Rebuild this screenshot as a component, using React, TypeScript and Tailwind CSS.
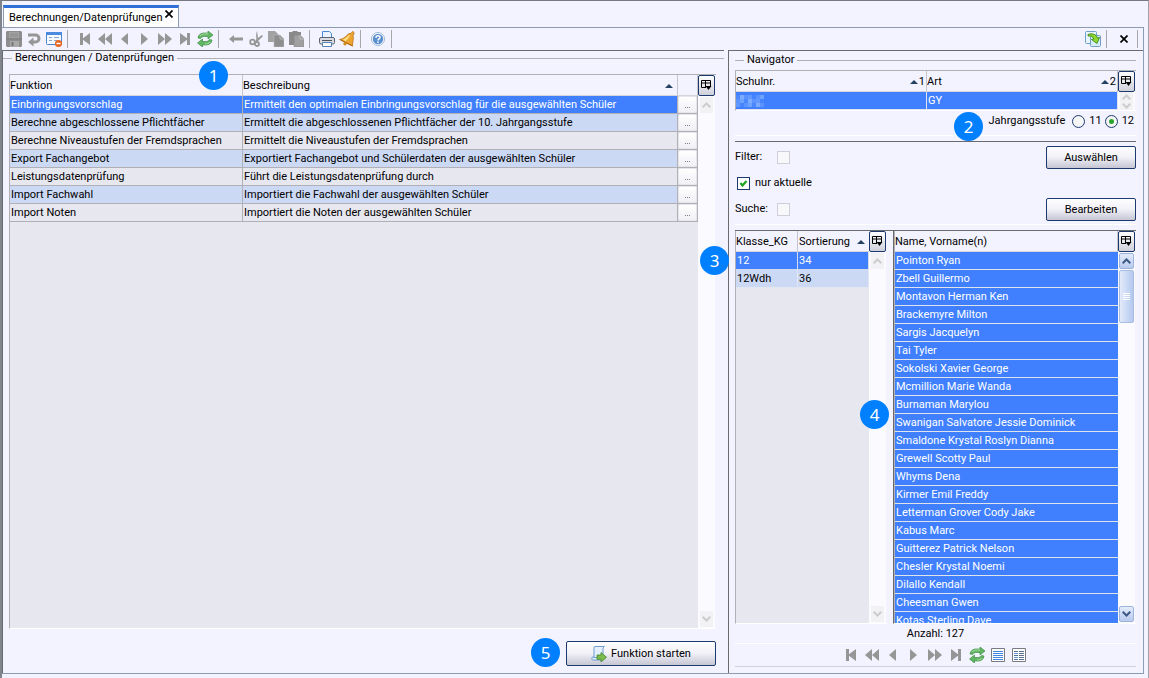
import React from "react";

type IconProps = { children: React.ReactNode; box?: number };

const Svg = ({ children, box = 16 }: IconProps) => (
  <svg width={box} height={box} viewBox={`0 0 ${box} ${box}`} aria-hidden="true" className="block shrink-0">
    {children}
  </svg>
);

const GREY = "#969696";

const SaveIcon = () => (
  <Svg>
    <path d="M1 0h14l1 1v14l-1 1H1l-1-1V1z" fill="#8e8e8e" />
    <path d="M3 1h10v6H3z" fill="#a2a2a2" />
    <path d="M4 3h8M4 5h8" stroke="#8c8c8c" />
    <path d="M4 10h9v6H4z" fill="#aaa" />
    <path d="M5.500 11h2v4h-2z" fill="#777" />
    <path d="M0 8h16" stroke="#7f7f7f" />
  </Svg>
);
const UndoIcon = () => (
  <Svg>
    <path d="M2 4h7.500a3.500 3.500 0 0 1 0 7H6" fill="none" stroke={GREY} strokeWidth="3" />
    <path d="M7.500 6.500v9L2 11z" fill={GREY} />
  </Svg>
);
const FormIcon = () => (
  <Svg>
    <rect x="0.500" y="1.500" width="15" height="12" rx="1" fill="#f4f8ff" stroke="#4a86cf" />
    <path d="M0 1h16v3H0z" fill="#4a8be0" />
    <path d="M3 6.500h3M8 6.500h5M3 9.500h3M8 9.500h3" stroke="#8aa7cc" />
    <circle cx="12.500" cy="12.500" r="3.500" fill="#e8641b" />
    <path d="M10.500 12.500h4" stroke="#fff" strokeWidth="1.500" />
  </Svg>
);
const FirstIcon = () => (
  <Svg>
    <path d="M3 2h3v5.200L13 2v12L6 8.800V14H3z" fill={GREY} />
  </Svg>
);
const LastIcon = () => (
  <Svg>
    <path d="M13 2h-3v5.200L3 2v12l7-5.200V14h3z" fill={GREY} />
  </Svg>
);
const RewindIcon = () => (
  <Svg>
    <path d="M8 2v12L1 8zM15 2v12L8 8z" fill={GREY} />
  </Svg>
);
const ForwardIcon = () => (
  <Svg>
    <path d="M1 2v12l7-6zM8 2v12l7-6z" fill={GREY} />
  </Svg>
);
const PrevIcon = () => (
  <Svg>
    <path d="M11 2v12L4 8z" fill={GREY} />
  </Svg>
);
const NextIcon = () => (
  <Svg>
    <path d="M4 2v12l7-6z" fill={GREY} />
  </Svg>
);
const RefreshIcon = () => (
  <Svg>
    <path d="M1 7C1.500 3.500 4 2 7 2h4V0l5 4-5 4V5.500H7.500C5.500 5.500 4.500 6 3.500 7.500z" fill="#62b562" stroke="#3f8f46" strokeWidth=".7" />
    <path d="M15 9c-.500 3.500-3 5-6 5H5.500v2L.500 12l5-4v2.500h3c2 0 3-.500 4-2z" fill="#62b562" stroke="#3f8f46" strokeWidth=".7" />
    <path d="M3 5c1-1.500 3-2 5-2h3M13 11c-1 1.500-3 2-5 2" fill="none" stroke="#a7dca2" />
  </Svg>
);
const BackIcon = () => (
  <Svg>
    <path d="M1 8l5-4v2.500h9v3H6V12z" fill={GREY} />
  </Svg>
);
const CutIcon = () => (
  <Svg>
    <path d="M9 0c-1 3-1 5-.500 8L7 11l1.500.500L15 5l-1-1-4 3z" fill={GREY} />
    <circle cx="4.500" cy="11" r="2.300" fill="none" stroke={GREY} strokeWidth="1.800" />
    <circle cx="9" cy="13" r="2" fill="none" stroke={GREY} strokeWidth="1.800" />
  </Svg>
);
const CopyIcon = () => (
  <Svg>
    <path d="M0 0h7l3 3v8H0z" fill="#a2a2a2" />
    <path d="M6 4h6l4 4v8H6z" fill="#8e8e8e" stroke="#b9b9b9" strokeWidth=".6" />
    <path d="M12 4v4h4" fill="none" stroke="#b8b8b8" />
  </Svg>
);
const PasteIcon = () => (
  <Svg>
    <path d="M1 1h3l1-1h4l1 1h3v13H1z" fill="#8a8a8a" />
    <path d="M6 4h6l4 4v8H6z" fill="#a0a0a0" stroke="#858585" strokeWidth=".6" />
    <path d="M12 4v4h4" fill="none" stroke="#bdbdbd" />
  </Svg>
);
const PrintIcon = () => (
  <Svg>
    <path d="M3.500 8V.500h7l2 2V8z" fill="#eaf3ff" stroke="#4b8ad0" />
    <rect x=".5" y="6.500" width="15" height="6.500" rx="1.500" fill="#d9dce2" stroke="#5c6470" />
    <path d="M3 9.500h10" stroke="#4d535c" />
    <path d="M3.500 11.500h9v4h-9z" fill="#fff" stroke="#5582b8" />
  </Svg>
);
const BellIcon = () => (
  <Svg>
    <path d="M13.500.500c1.300.300 2 1.300 1.500 2.500l-1 1c1 4-.500 6.500-.500 11L.500 8.500C5 8 7 5 10 2.500l2 0z" fill="#eea42c" stroke="#b9721a" strokeWidth=".8" />
    <path d="M10 4C7 7 5.500 8 3.500 8.700l3 1.500C9 8.500 10 6 11 4.500z" fill="#ffe08a" />
    <path d="M2 9l11.500 6" stroke="#a8640f" />
    <circle cx="6" cy="12.800" r="1.700" fill="#d68a1c" />
  </Svg>
);
const HelpIcon = () => (
  <Svg>
    <circle cx="8" cy="8" r="6.500" fill="#fff" stroke="#9fb6d6" />
    <circle cx="8" cy="8" r="5.200" fill="#5b8fd0" />
    <path d="M6 6.700c0-2.700 4-2.600 4-.3C10 8 8 7.900 8 9.600M8 10.600v1.400" fill="none" stroke="#fff" strokeWidth="1.500" />
  </Svg>
);
const SyncPagesIcon = () => (
  <Svg>
    <rect x=".5" y=".5" width="11" height="12" rx="1" fill="#eaf4fc" stroke="#6fa0c8" />
    <rect x="5.500" y="4.500" width="10" height="11" rx="1" fill="#d8ebf8" stroke="#6fa0c8" />
    <path d="M3 3.500c4-1.500 8-.500 9.500 3.500l2-.500-2.500 6-5.500-4 2.300-.500C8 6 6 4.500 3 5z" fill="#8fd62e" stroke="#3c8a1c" strokeWidth=".9" />
  </Svg>
);
const ScriptRunIcon = () => (
  <Svg>
    <path d="M4 .500h9.500c-1.500 1-1.500 2-1.500 3.500V14H1.500C.500 14 .500 11 2 11h1V3c0-1.500 0-2.500 1-2.500z" fill="#e3f0fc" stroke="#6d9dcb" />
    <path d="M2 11.500h7" stroke="#7aa6d0" />
    <path d="M6 9h4V6.500l5.500 4.700L10 16v-2.700H6z" fill="#7cbc4c" stroke="#3f8428" strokeWidth=".8" />
  </Svg>
);
const ListIcon = () => (
  <Svg>
    <path d="M1.500 1.500h13v13h-13z" fill="#fff" stroke="#777b84" />
    <path d="M3 4.500h10M3 6.500h10M3 8.500h10M3 10.500h10M3 12.500h10" stroke="#3f87e0" />
  </Svg>
);
const DetailIcon = () => (
  <Svg>
    <path d="M1.500 1.500h13v13h-13z" fill="#fff" stroke="#777b84" />
    <path d="M3 4.500h4M3 8.500h4M3 12.500h4M8 4.500h5M8 6.500h5M8 8.500h5M8 10.500h5M8 12.500h5" stroke="#5c6f8c" />
    <path d="M3 6.500h4M3 10.500h4" stroke="#5a9bec" />
  </Svg>
);
const CloseIcon = ({ size = 8 }: { size?: number }) => (
  <svg width={size} height={size} viewBox="0 0 8 8" aria-hidden="true">
    <path d="M.5.5l7 7M7.500.5l-7 7" stroke="#000" strokeWidth="1.700" />
  </svg>
);
const SortArrow = () => (
  <svg width="8" height="4" viewBox="0 0 8 4" aria-hidden="true" className="shrink-0">
    <path d="M4 0l4 4H0z" fill="#22405f" />
  </svg>
);

function IconButton({ label, children, wide }: { label: string; children: React.ReactNode; wide?: boolean }) {
  return (
    <button
      type="button"
      aria-label={label}
      className={wide ? "flex h-5 w-[21px] items-center pl-[2px]" : "flex h-5 w-5 items-center justify-center"}
    >
      {children}
    </button>
  );
}

const Separator = ({ end }: { end?: boolean }) => (
  <span className={end ? "flex h-5 w-[7px] pl-[3px]" : "flex h-5 w-[11px] pl-[3px]"}>
    <span className="h-[18px] w-px self-center bg-[#a8a8ac]" />
  </span>
);

function Legend({ children }: { children: React.ReactNode }) {
  return (
    <div className="flex items-center">
      <span className="h-px w-[9px] bg-[#b0b0b6]" />
      <h2 className="px-[3px] leading-[14px]">{children}</h2>
      <span className="h-px flex-1 bg-[#b0b0b6]" />
    </div>
  );
}

function ColumnButton() {
  return (
    <button
      type="button"
      aria-label="Spalten auswählen"
      className="flex h-[21px] w-[17px] shrink-0 items-center justify-center rounded-[2px] border border-[#1b3a6e] bg-gradient-to-b from-white to-[#cfcfdc]"
    >
      <svg width="11" height="11" viewBox="0 0 11 11" aria-hidden="true">
        <path d="M5 7.500H.500V.500h9V6M.500 3h9M4.500.500v7" fill="none" stroke="#000" />
        <path d="M4.500 6h6l-3 4z" fill="#000" />
      </svg>
    </button>
  );
}

function ScrollButton({ down, active, short }: { down?: boolean; active?: boolean; short?: boolean }) {
  const size = short ? "h-[9px] w-[13px]" : active ? "h-4 w-[15px]" : "h-4 w-[13px]";
  const look = active
    ? "rounded-[2px] border border-[#9db4dc] bg-gradient-to-b from-[#e4ecfb] to-[#b9caee]"
    : "bg-[#f2f2f4]";
  return (
    <button
      type="button"
      aria-label={down ? "Nach unten" : "Nach oben"}
      className={`flex shrink-0 items-center justify-center ${size} ${look}`}
    >
      <svg width="9" height="6" viewBox="0 0 9 6" aria-hidden="true">
        <path
          d={down ? "M.7.700l3.800 3.800L8.300.700" : "M.7 5.300l3.800-3.800 3.800 3.800"}
          fill="none"
          stroke={active ? "#3d5a85" : "#cdcdd0"}
          strokeWidth="2"
        />
      </svg>
    </button>
  );
}

function SideBar({ active, short }: { active?: boolean; short?: boolean }) {
  return (
    <div className="flex w-[18px] shrink-0 flex-col">
      <ColumnButton />
      <div
        className={`flex w-[17px] flex-1 flex-col items-center justify-between bg-[#fbfbff] ${short ? "py-0" : "py-px"}`}
      >
        <div className="flex flex-col items-center gap-px">
          <ScrollButton active={active} short={short} />
          {active && (
            <div className="flex h-[53px] w-[15px] flex-col items-center justify-center gap-px rounded-[2px] border border-[#a9bce2] bg-gradient-to-r from-[#e3ebfb] to-[#b4c8ee]">
              <span className="h-px w-[7px] bg-white" />
              <span className="h-px w-[7px] bg-white" />
              <span className="h-px w-[7px] bg-white" />
              <span className="h-px w-[7px] bg-white" />
            </div>
          )}
        </div>
        <ScrollButton down active={active} short={short} />
      </div>
    </div>
  );
}

function PushButton({ children, className }: { children: React.ReactNode; className: string }) {
  return (
    <button
      type="button"
      className={`flex items-center justify-center gap-[4px] rounded-[2px] border border-[#1b3a6e] bg-gradient-to-b from-white via-[#f0f0f7] to-[#c6c6d4] pt-px ${className}`}
    >
      {children}
    </button>
  );
}

function CheckBox({ id, checked }: { id: string; checked?: boolean }) {
  return (
    <span className="grid">
      <input
        id={id}
        type="checkbox"
        defaultChecked={checked}
        className="peer col-start-1 row-start-1 h-[13px] w-[13px] appearance-none border border-[#cfcfdb] bg-[#f8f8fa] checked:border-[#1b3a6e] checked:bg-white"
      />
      <svg
        width="13"
        height="13"
        viewBox="0 0 13 13"
        aria-hidden="true"
        className="pointer-events-none invisible col-start-1 row-start-1 peer-checked:visible"
      >
        <path d="M3.500 6l2 2.500L9.500 4" fill="none" stroke="#21a121" strokeWidth="2.200" />
      </svg>
    </span>
  );
}

function Radio({ label, checked }: { label: string; checked?: boolean }) {
  return (
    <label className="flex items-center gap-[4px]">
      <span className="grid place-items-center">
        <input
          type="radio"
          name="stufe"
          defaultChecked={checked}
          className="peer col-start-1 row-start-1 h-[13px] w-[13px] appearance-none rounded-full border border-[#1b3a6e] bg-[#f6f6f6]"
        />
        <span className="pointer-events-none invisible col-start-1 row-start-1 h-[5px] w-[5px] rounded-full bg-[#2ca52c] peer-checked:visible" />
      </span>
      {label}
    </label>
  );
}

function Badge({ n, className }: { n: number; className: string }) {
  return (
    <span
      className={`absolute z-10 flex h-[29px] w-[29px] items-center justify-center rounded-full bg-[#0080ff] font-['Noto_Sans',sans-serif] text-[17px] leading-none text-white ${className}`}
    >
      {n}
    </span>
  );
}

const functions: [string, string][] = [
  ["Einbringungsvorschlag", "Ermittelt den optimalen Einbringungsvorschlag für die ausgewählten Schüler"],
  ["Berechne abgeschlossene Pflichtfächer", "Ermittelt die abgeschlossenen Pflichtfächer der 10. Jahrgangsstufe"],
  ["Berechne Niveaustufen der Fremdsprachen", "Ermittelt die Niveaustufen der Fremdsprachen"],
  ["Export Fachangebot", "Exportiert Fachangebot und Schülerdaten der ausgewählten Schüler"],
  ["Leistungsdatenprüfung", "Führt die Leistungsdatenprüfung durch"],
  ["Import Fachwahl", "Importiert die Fachwahl der ausgewählten Schüler"],
  ["Import Noten", "Importiert die Noten der ausgewählten Schüler"],
];

const names = [
  "Pointon Ryan",
  "Zbell Guillermo",
  "Montavon Herman Ken",
  "Brackemyre Milton",
  "Sargis Jacquelyn",
  "Tai Tyler",
  "Sokolski Xavier George",
  "Mcmillion Marie Wanda",
  "Burnaman Marylou",
  "Swanigan Salvatore Jessie Dominick",
  "Smaldone Krystal Roslyn Dianna",
  "Grewell Scotty Paul",
  "Whyms Dena",
  "Kirmer Emil Freddy",
  "Letterman Grover Cody Jake",
  "Kabus Marc",
  "Guitterez Patrick Nelson",
  "Chesler Krystal Noemi",
  "Dilallo Kendall",
  "Cheesman Gwen",
  "Kotas Sterling Dave",
];

const mosaic = ["#5b93ff", "#6ea2ff", "#4b88ff", "#7cabff", "#5b93ff", "#6298ff", "#4583ff"];

const TABLE = "w-full table-fixed border-separate border-spacing-0 text-left";
const TH = "h-[21px] truncate border-b border-[#d4d4da] p-0 pt-[2px] font-normal";
const TD = "h-[18px] truncate border-b p-0 pt-px pl-px";
const PANEL_TABLE = "flex border-t border-l border-b border-t-[#b0b0b6] border-l-[#b0b0b6] border-b-white";

function FunctionsPanel() {
  return (
    <section className="flex min-w-0 flex-1 flex-col border-t border-l border-[#6b6b6f] pb-[7px]">
      <Legend>Berechnungen / Datenprüfungen</Legend>
      <div className={`mt-[9px] mr-[8px] ml-[6px] min-h-0 flex-1 ${PANEL_TABLE}`}>
        <div className="min-w-0 flex-1 bg-[#e7e7f0]">
          <table className={TABLE}>
            <colgroup>
              <col className="w-[233px]" />
              <col />
              <col className="w-5" />
            </colgroup>
            <thead className="bg-[#f3f3ff]">
              <tr>
                <th className={`${TH} border-r border-r-[#c4c4ca]`}>Funktion</th>
                <th className={`${TH} border-r border-r-[#c4c4ca]`}>
                  <span className="flex items-center justify-between pr-[4px]">
                    Beschreibung
                    <SortArrow />
                  </span>
                </th>
                <th className={`${TH} border-r border-r-[#c4c4ca]`} aria-label="Details" />
              </tr>
            </thead>
            <tbody>
              {functions.map(([name, text], i) => (
                <tr
                  key={name}
                  className={i === 0 ? "bg-[#4080ff] text-white" : i % 2 ? "bg-[#ccd9f5]" : "bg-[#e7e7f0]"}
                >
                  <td className={`${TD} border-r border-[#b0b0b6]`}>{name}</td>
                  <td className={`${TD} border-r border-[#b0b0b6]`}>{text}</td>
                  <td className="h-[18px] border-r border-b border-[#b0b0b6] bg-[#d9d9e2] p-0">
                    <button
                      type="button"
                      aria-label={`${name} Details`}
                      className="flex h-[17px] w-full items-center justify-center gap-px rounded-[2px] border border-[#e6e6ec] bg-gradient-to-b from-white to-[#f0f0f6] pt-[6px]"
                    >
                      <span className="h-px w-px bg-[#8a7a8a]" />
                      <span className="h-px w-px bg-[#8a7a8a]" />
                      <span className="h-px w-px bg-[#8a7a8a]" />
                    </button>
                  </td>
                </tr>
              ))}
            </tbody>
          </table>
        </div>
        <SideBar />
      </div>
      <div className="mt-[12px] mr-[8px] flex justify-end">
        <PushButton className="h-[25px] w-[150px]">
          <ScriptRunIcon />
          Funktion starten
        </PushButton>
      </div>
    </section>
  );
}

function NavigatorPanel() {
  return (
    <section className="flex w-[415px] shrink-0 flex-col border-t border-l border-[#6b6b6f] pt-[2px] pr-[7px] pl-[6px]">
      <Legend>Navigator</Legend>
      <div className={`mt-[3px] ${PANEL_TABLE}`}>
        <table className={TABLE}>
          <thead>
            <tr>
              <th className={`${TH} border-r border-r-[#c4c4ca]`}>
                <span className="flex items-center">
                  <span className="flex-1">Schulnr.</span>
                  <SortArrow />
                  <span className="pr-px pl-px">1</span>
                </span>
              </th>
              <th className={`${TH} border-r border-r-[#c4c4ca]`}>
                <span className="flex items-center">
                  <span className="flex-1">Art</span>
                  <SortArrow />
                  <span className="pr-px pl-px">2</span>
                </span>
              </th>
            </tr>
          </thead>
          <tbody>
            <tr className="bg-[#4080ff] text-white">
              <td className="h-[18px] border-r border-b border-[#e0e4f0] p-0">
                <svg width="28" height="12" viewBox="0 0 28 12" aria-label="Unkenntlich" role="img" className="block">
                  {mosaic.map((fill, i) => (
                    <g key={i}>
                      <rect x={i * 4} y={0} width="4" height="4" fill={mosaic[(i + 2) % 7]} />
                      <rect x={i * 4} y={4} width="4" height="4" fill={fill} />
                      <rect x={i * 4} y={8} width="4" height="4" fill={mosaic[(i + 5) % 7]} />
                    </g>
                  ))}
                </svg>
              </td>
              <td className={`${TD} border-r border-[#e0e4f0]`}>GY</td>
            </tr>
          </tbody>
        </table>
        <SideBar short />
      </div>
      <div className="flex h-[20px] items-center justify-end gap-[3px] pr-[2px]" role="radiogroup" aria-labelledby="stufe-label">
        <span id="stufe-label" className="pr-[4px]">
          Jahrgangsstufe
        </span>
        <Radio label="11" />
        <Radio label="12" checked />
      </div>
      <div className="mt-[4px] h-px bg-white" />
      <div className="mt-[5px] flex flex-col border-t border-[#6b6b6f] pt-[3px]">
        <div className="flex h-[24px] items-center">
          <label htmlFor="filter" className="w-[42px]">
            Filter:
          </label>
          <CheckBox id="filter" />
          <PushButton className="ml-auto h-[23px] w-[90px]">Auswählen</PushButton>
        </div>
        <div className="flex h-[28px] items-center gap-[5px] pl-[2px]">
          <CheckBox id="aktuelle" checked />
          <label htmlFor="aktuelle">nur aktuelle</label>
        </div>
        <div className="flex h-[24px] items-center">
          <label htmlFor="suche" className="w-[42px]">
            Suche:
          </label>
          <CheckBox id="suche" />
          <PushButton className="ml-auto h-[23px] w-[90px]">Bearbeiten</PushButton>
        </div>
      </div>
      <div className="mt-[3px] h-px bg-white" />
      <div className="mt-[5px] flex min-h-0 flex-1 gap-[6px] border-t border-[#6b6b6f]">
        <div className="flex w-[152px] shrink-0 border-b border-l border-b-white border-l-[#b0b0b6]">
          <div className="min-w-0 flex-1 bg-[#e7e7f0]">
            <table className={TABLE}>
              <colgroup>
                <col className="w-[62px]" />
                <col />
              </colgroup>
              <thead className="bg-[#f3f3ff]">
                <tr>
                  <th className={`${TH} border-r border-r-[#c4c4ca]`}>Klasse_KG</th>
                  <th className={TH}>
                    <span className="flex items-center justify-between pr-[4px] pl-px">
                      Sortierung
                      <SortArrow />
                    </span>
                  </th>
                </tr>
              </thead>
              <tbody>
                <tr className="bg-[#4080ff] text-white">
                  <td className={`${TD} border-r border-[#d5dcee]`}>12</td>
                  <td className={`${TD} border-r border-[#d5dcee]`}>34</td>
                </tr>
                <tr className="bg-[#ccd9f5]">
                  <td className={`${TD} border-r border-[#e1e6f2]`}>12Wdh</td>
                  <td className={`${TD} border-r border-[#e1e6f2]`}>36</td>
                </tr>
              </tbody>
            </table>
          </div>
          <SideBar />
        </div>
        <div className="flex min-w-0 flex-1 border-b border-l border-b-white border-l-[#6b6b6f]">
          <div className="min-w-0 flex-1 overflow-hidden border-l border-[#b0b0b6]">
            <table className={TABLE}>
              <thead>
                <tr>
                  <th className={`${TH} border-r border-r-[#c4c4ca]`}>Name, Vorname(n)</th>
                </tr>
              </thead>
              <tbody>
                {names.map((name) => (
                  <tr key={name} className="bg-[#4080ff] text-white">
                    <td className={`${TD} border-[#dfe3ec]`}>{name}</td>
                  </tr>
                ))}
              </tbody>
            </table>
          </div>
          <SideBar active />
        </div>
      </div>
      <p className="h-[19px] text-center leading-[19px]">Anzahl: 127</p>
      <div className="flex h-[24px] items-center justify-center border-t border-b border-t-white border-b-[#cfcfe0]">
        <IconButton wide label="Erster Datensatz"><FirstIcon /></IconButton>
        <IconButton wide label="Schnell zurück"><RewindIcon /></IconButton>
        <IconButton wide label="Zurück"><PrevIcon /></IconButton>
        <IconButton wide label="Weiter"><NextIcon /></IconButton>
        <IconButton wide label="Schnell vor"><ForwardIcon /></IconButton>
        <IconButton wide label="Letzter Datensatz"><LastIcon /></IconButton>
        <IconButton wide label="Aktualisieren"><RefreshIcon /></IconButton>
        <IconButton wide label="Liste"><ListIcon /></IconButton>
        <IconButton wide label="Detailliste"><DetailIcon /></IconButton>
      </div>
      <div className="h-[6px]" />
    </section>
  );
}

export default function App() {
  return (
    <main className="relative flex h-screen flex-col overflow-hidden border-t border-r border-l-2 border-t-[#77777f] border-r-[#a0a0a8] border-l-[#80848c] bg-[#f3f3ff] pr-[4px] pb-[4px] font-['Roboto','Noto_Sans',sans-serif] text-[11px] leading-[14px] text-black">
      <nav className="flex pt-[4px] pl-px">
        <div className="flex h-[22px] items-center gap-[2px] border-t-3 border-r border-l border-t-[#2f6fd8] border-r-[#8c9cb4] border-l-[#8c9cb4] bg-white px-[5px]">
          <a href="#tab">Berechnungen/Datenprüfungen</a>
          <button type="button" aria-label="Tab schließen" className="flex h-4 items-start">
            <CloseIcon />
          </button>
        </div>
      </nav>
      <div className="flex min-h-0 flex-1 flex-col border-t border-r border-b border-[#8c9cb4]">
        <div className="flex h-[22px] items-center justify-between pr-[2px] pl-[2px]" role="toolbar">
          <div className="flex items-center">
            <IconButton label="Speichern"><SaveIcon /></IconButton>
            <IconButton label="Rückgängig"><UndoIcon /></IconButton>
            <IconButton label="Formular löschen"><FormIcon /></IconButton>
            <Separator />
            <IconButton label="Erster"><FirstIcon /></IconButton>
            <IconButton label="Schnell zurück"><RewindIcon /></IconButton>
            <IconButton label="Zurück"><PrevIcon /></IconButton>
            <IconButton label="Weiter"><NextIcon /></IconButton>
            <IconButton label="Schnell vor"><ForwardIcon /></IconButton>
            <IconButton label="Letzter"><LastIcon /></IconButton>
            <IconButton label="Aktualisieren"><RefreshIcon /></IconButton>
            <Separator />
            <IconButton label="Entfernen"><BackIcon /></IconButton>
            <IconButton label="Ausschneiden"><CutIcon /></IconButton>
            <IconButton label="Kopieren"><CopyIcon /></IconButton>
            <IconButton label="Einfügen"><PasteIcon /></IconButton>
            <Separator />
            <IconButton label="Drucken"><PrintIcon /></IconButton>
            <IconButton label="Benachrichtigung"><BellIcon /></IconButton>
            <Separator />
            <IconButton label="Hilfe"><HelpIcon /></IconButton>
            <Separator />
          </div>
          <div className="flex items-center">
            <IconButton label="Synchronisieren"><SyncPagesIcon /></IconButton>
            <Separator />
            <IconButton label="Schließen"><CloseIcon /></IconButton>
            <Separator end />
          </div>
        </div>
        <div className="flex min-h-0 flex-1 gap-[4px]">
          <FunctionsPanel />
          <NavigatorPanel />
        </div>
      </div>
      <Badge n={1} className="top-[60px] left-[197px]" />
      <Badge n={2} className="top-[111px] right-[165px]" />
      <Badge n={3} className="top-[245px] right-[419px]" />
      <Badge n={4} className="top-[399px] right-[259px]" />
      <Badge n={5} className="right-[588px] bottom-[11px]" />
    </main>
  );
}
